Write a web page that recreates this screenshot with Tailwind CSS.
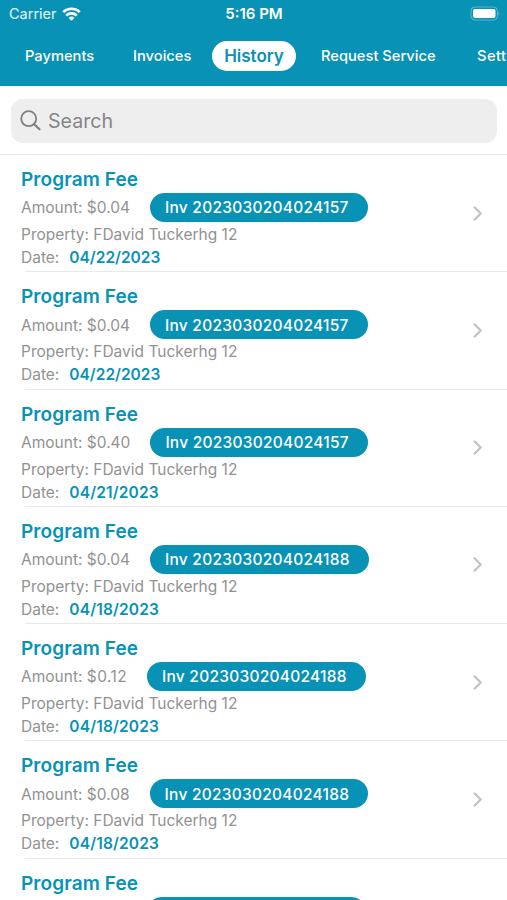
<!DOCTYPE html>
<html lang="en">
<head>
<meta charset="utf-8">
<title>History</title>
<script src="https://cdn.jsdelivr.net/npm/@tailwindcss/browser@4"></script>
</head>
<body class="w-[507px] h-[900px] overflow-hidden bg-white font-['Inter',sans-serif]">
<div class="w-[507px] h-[900px] overflow-hidden flex flex-col">
  <header class="h-[86px] shrink-0 bg-[#0892b6] text-white">
    <div class="h-[28px] grid grid-cols-3 items-center pl-[9px] pr-[7px]">
      <div class="flex items-center gap-[5px] text-[14.5px] text-white/90"><span class="whitespace-nowrap">Carrier</span>
        <svg class="w-[19px] h-[14px] -mt-[1px]" viewBox="0 0 19 14" fill="none" stroke="#fff" stroke-width="2.600"><path d="M1.200 5.100a12 12 0 0 1 16.600 0"/><path d="M4.200 8.500a7.700 7.700 0 0 1 10.600 0"/><path d="M9.500 13.800 6.600 10.900a4.200 4.200 0 0 1 5.800 0Z" fill="#fff" stroke="none"/></svg>
      </div>
      <div class="text-center text-[15px] -ml-[1px] font-semibold whitespace-nowrap">5:16 PM</div>
      <svg class="justify-self-end w-[30px] h-[15px] -mt-[1px]" viewBox="0 0 30 15"><rect x="1" y="1" width="26.500" height="13" rx="4" fill="none" stroke="#fff" stroke-opacity=".35"/><rect x="3" y="3" width="22.500" height="9" rx="2" fill="#fff"/><path d="M28.500 5.500q1.500 2 0 4z" fill="#fff" fill-opacity=".4"/></svg>
    </div>
    <nav class="h-[57px] w-[507px] overflow-hidden flex items-center text-[14.7px] font-medium whitespace-nowrap">
      <span class="shrink-0 w-[108px] pl-[25px]">Payments</span>
      <span class="shrink-0 w-[104px] pl-[25px]">Invoices</span>
      <span class="shrink-0 w-[84px] h-[30px] -mt-[1px] pt-[1px] rounded-full bg-white text-[#0892b6] text-[17px] font-semibold flex items-center justify-center">History</span>
      <span class="shrink-0 w-[156px] pl-[25px]">Request Service</span>
      <span class="shrink-0 pl-[25px] tracking-[0.4px]">Settings</span>
    </nav>
  </header>
  <div class="h-[69px] shrink-0 pt-[12.5px] px-[11px] border-b border-[#ebebeb]">
    <div class="w-[486px] h-[44px] rounded-[12px] bg-[#eeeeee] flex items-center pl-[9px] text-[#858585] text-[19.6px]">
      <svg class="w-[21px] h-[21px] mr-[7px]" viewBox="0 0 21 21" fill="none" stroke="#808080" stroke-width="1.800" stroke-linecap="round"><circle cx="8.700" cy="8.700" r="7.500"/><path d="m14.200 14.200 5.300 5" stroke-width="2.200"/></svg>
      <span class="pt-[2px]">Search</span>
    </div>
  </div>
  <main id="list" class="flex flex-col"></main>
</div>
<script>
const rows = [
  ['$0.04', '2023030204024157', '04/22/2023'],
  ['$0.04', '2023030204024157', '04/22/2023'],
  ['$0.40', '2023030204024157', '04/21/2023'],
  ['$0.04', '2023030204024188', '04/18/2023'],
  ['$0.12', '2023030204024188', '04/18/2023'],
  ['$0.08', '2023030204024188', '04/18/2023'],
  ['$0.12', '2023030204024188', '04/18/2023'],
];
document.getElementById('list').innerHTML = rows.map(([amount, inv, date]) => `
  <article class="h-[117.25px] shrink-0 flex flex-col whitespace-nowrap text-[15.5px] text-[#929292]">
    <div class="h-[116.25px] shrink-0 pl-[21px] pr-[24.5px] flex items-center justify-between">
      <div class="h-full pt-[11px]">
        <h2 class="h-[27px] leading-[27px] text-[19px] tracking-[0.1px] font-semibold text-[#0892b6]">Program Fee</h2>
        <div class="h-[29px] flex items-center"><span class="min-w-[106px] pt-[1px]">Amount: <span class="${amount === '$0.12' ? 'tracking-[0.4px]' : 'tracking-normal'}">${amount}</span></span><span class="ml-[20px] h-[29px] pl-[15px] pr-[19px] rounded-full bg-[#0892b6] text-white font-medium tracking-[0.25px] flex items-center"><span class="pt-[1px]">Inv ${inv}</span></span></div>
        <div class="h-[24px] leading-[25px]">Property: FDavid Tuckerhg 12</div>
        <div class="h-[24px] leading-[24px]">Date:<span class="ml-[10px] font-semibold text-[#0892b6] ${date === '04/22/2023' ? 'tracking-normal' : 'tracking-[0.15px]'}">${date}</span></div>
      </div>
      <svg class="w-[11px] h-[17px]" viewBox="0 0 11 17" fill="none" stroke="#c2c2c2" stroke-width="2.200"><path d="m2 1.800 6.700 6.700L2 15.200"/></svg>
    </div>
    <div class="ml-[25px] h-px bg-[#e9e9e9]"></div>
  </article>`).join('');
</script>
</body>
</html>
